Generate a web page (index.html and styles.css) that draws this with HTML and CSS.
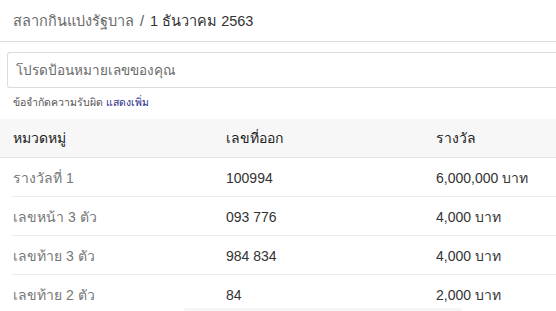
FILE: index.html
```html
<!DOCTYPE html>
<html lang="th">
<head>
<meta charset="utf-8">
<title>สลากกินแบ่งรัฐบาล</title>
<link rel="stylesheet" href="styles.css">
</head>
<body>
<div class="page">
  <nav class="breadcrumb">
    <span class="crumb">สลากกินแบ่งรัฐบาล</span>
    <span class="sep">/</span>
    <span class="current">1 ธันวาคม 2563</span>
  </nav>
  <div class="search">
    <div class="input">โปรดป้อนหมายเลขของคุณ</div>
  </div>
  <p class="disclaimer">ข้อจำกัดความรับผิด <a class="more" href="#">แสดงเพิ่ม</a></p>
  <table class="results">
    <thead>
      <tr><th>หมวดหมู่</th><th>เลขที่ออก</th><th>รางวัล</th></tr>
    </thead>
    <tbody>
      <tr><td class="cat">รางวัลที่ 1</td><td>100994</td><td>6,000,000 บาท</td></tr>
      <tr><td class="cat">เลขหน้า 3 ตัว</td><td>093 776</td><td>4,000 บาท</td></tr>
      <tr><td class="cat">เลขท้าย 3 ตัว</td><td>984 834</td><td>4,000 บาท</td></tr>
      <tr><td class="cat">เลขท้าย 2 ตัว</td><td>84</td><td>2,000 บาท</td></tr>
    </tbody>
  </table>
</div>
<div class="overlay-edge"></div>
</body>
</html>
```

FILE: styles.css
```css
html, body {
  margin: 0;
  padding: 0;
  overflow: hidden;
  background: #fff;
}
body {
  font-family: "Liberation Sans", Arial, sans-serif;
  color: #333;
}
.page {
  width: 100%;
}
.breadcrumb {
  height: 42px;
  box-sizing: border-box;
  padding: 0 13px;
  display: flex;
  align-items: center;
  gap: 6px;
  font-size: 14.5px;
  border-bottom: 1px solid #dcdcdc;
}
.crumb { color: #6a6a6a; }
.sep { color: #555; }
.current { color: #333; }
.search {
  padding: 10px 0 0 7px;
}
.input {
  height: 36px;
  box-sizing: border-box;
  border: 1px solid #dcdcdc;
  border-right: none;
  border-radius: 3px 0 0 3px;
  padding: 0 8px;
  display: flex;
  align-items: center;
  font-size: 13.5px;
  color: #6a6a6a;
}
.disclaimer {
  margin: 6px 0 0 13px;
  font-size: 10.5px;
  color: #555;
  height: 25px;
  line-height: 16px;
}
.more {
  color: #2c2c8c;
  text-decoration: none;
}
.results {
  width: 100%;
  border-collapse: collapse;
  font-size: 14px;
  table-layout: fixed;
}
.results th,
.results td {
  text-align: left;
  padding: 0 0 0 13px;
  height: 39px;
  font-weight: normal;
}
.results th:nth-child(1), .results td:nth-child(1) { width: 200px; }
.results th:nth-child(2), .results td:nth-child(2) { width: 197px; }
.results thead tr {
  background: #f7f7f7;
  border-bottom: 1px solid #e4e4e4;
}
.results th { color: #222; height: 38px; }
.results tbody td {
  color: #333;
  background: linear-gradient(#ececec, #ececec) left bottom / 100% 1px no-repeat;
}
.results tbody td:first-child {
  background-position: 12px bottom;
}
.results tbody tr:last-child td {
  background: none;
}
.results td.cat { color: #777; }
.overlay-edge {
  position: fixed;
  left: 184px;
  width: 278px;
  top: 308px;
  height: 3px;
  background: #f5f5f5;
  border-radius: 2px 2px 0 0;
}
```
